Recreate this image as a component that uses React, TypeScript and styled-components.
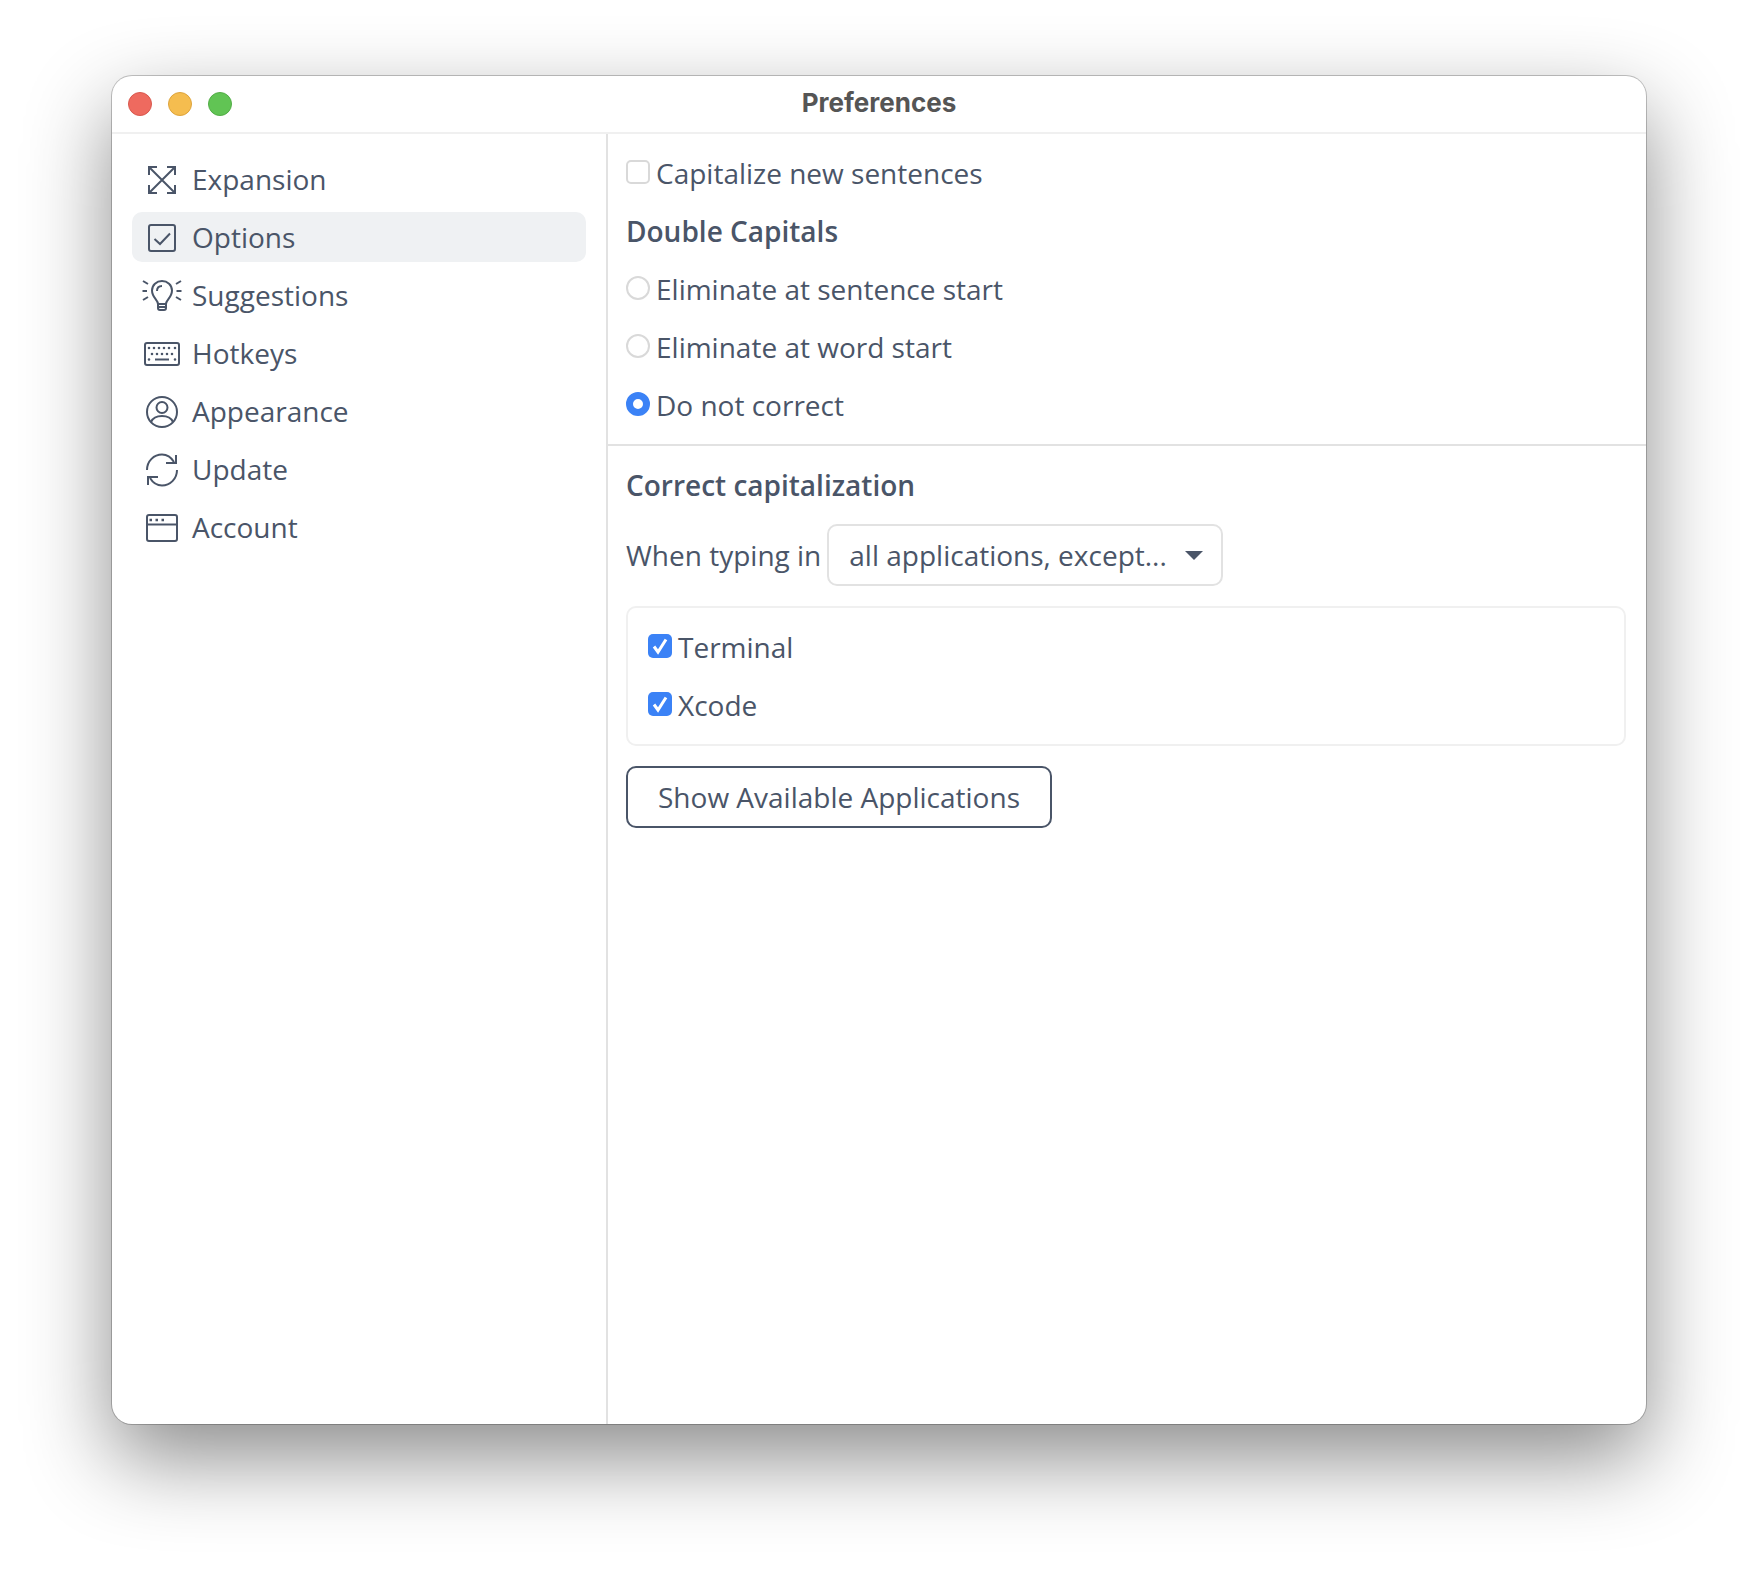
import React from "react";
import styled, { createGlobalStyle } from "styled-components";

const GlobalStyle = createGlobalStyle`
html, body {
  margin: 0;
  padding: 0;
  background: #fff;
}
body {
  font-family: "Open Sans", "Noto Sans", sans-serif;
  color: #4a5568;
}
`;

const IconSvg = ({ children }: { children: React.ReactNode }) => (
  <SideIcon viewBox="0 0 40 40" fill="none" stroke="currentColor" strokeWidth="2">
    {children}
  </SideIcon>
);

const ExpansionIcon = () => (
  <IconSvg>
    <path d="M7 7L33 33M33 7L7 33" />
    <path d="M7 15V7H15M25 7H33V15M33 25V33H25M15 33H7V25" />
  </IconSvg>
);

const OptionsIcon = () => (
  <IconSvg>
    <rect x="7" y="7" width="26" height="26" rx="2" />
    <path d="M12.5 21L18 26L28 15.5" />
  </IconSvg>
);

const SuggestionsIcon = () => (
  <IconSvg>
    <path d="M16 28C16 24 10 21.5 10 14.5C10 9 14.5 5 20 5C25.5 5 30 9 30 14.5C30 21.5 24 24 24 28Z" />
    <path d="M16 28V32C16 33.5 17 34 18 34H22C23 34 24 33.5 24 32V28M16 31H24" />
    <path d="M15 15C15 12 17 10 20 10" />
    <path d="M0.5 15H5M34.5 15H39.5M1 5L6 8M39 5L34 8M1 24L6 21M39 24L34 21" />
  </IconSvg>
);

const HotkeysIcon = () => (
  <IconSvg>
    <rect x="3" y="9" width="34" height="22" rx="2" />
    <path
      d="M7 14h.01M12 14h.01M17 14h.01M22 14h.01M27 14h.01M33 14h.01M10 20h.01M15 20h.01M20 20h.01M25 20h.01M30 20h.01M7 25.5h.01M33 25.5h.01"
      strokeLinecap="round"
      strokeWidth="2.6"
    />
    <path d="M13 25.5H27" />
  </IconSvg>
);

const AppearanceIcon = () => (
  <IconSvg>
    <circle cx="20" cy="20" r="15" />
    <circle cx="20" cy="15.5" r="5.5" />
    <path d="M9 30C11 25.5 15 24 20 24C25 24 29 25.5 31 30" />
  </IconSvg>
);

const UpdateIcon = () => (
  <IconSvg>
    <path d="M5 20C5 11 12 4.5 20 4.5C25 4.5 29 7 32 12" />
    <path d="M34 5V13H24" />
    <path d="M35 20C35 29 28 35.5 20 35.5C15 35.5 11 33 8 28" />
    <path d="M6 35V27H16" />
  </IconSvg>
);

const AccountIcon = () => (
  <IconSvg>
    <rect x="5" y="7" width="30" height="26" rx="2" />
    <path d="M5 16.5H35" />
    <path d="M7.5 12H10M13.5 12H16M19.5 12H22" strokeWidth="2.4" />
  </IconSvg>
);

const navItems = [
  { label: "Expansion", icon: <ExpansionIcon /> },
  { label: "Options", icon: <OptionsIcon />, active: true },
  { label: "Suggestions", icon: <SuggestionsIcon /> },
  { label: "Hotkeys", icon: <HotkeysIcon /> },
  { label: "Appearance", icon: <AppearanceIcon /> },
  { label: "Update", icon: <UpdateIcon /> },
  { label: "Account", icon: <AccountIcon /> },
];

const CheckMark = () => (
  <svg width="24" height="24" viewBox="0 0 24 24" fill="none" stroke="#fff" strokeWidth="3">
    <path d="M6 12.5L10 18L18 5.5" />
  </svg>
);

const App = () => {
  return (
    <Page>
      <GlobalStyle />
      <Window>
        <TitleBar>
          <Lights>
            <Light $color="#ee6a5f" $edge="#d9584e" />
            <Light $color="#f5bd4f" $edge="#dea43c" />
            <Light $color="#61c454" $edge="#52ad46" />
          </Lights>
          <Title>Preferences</Title>
        </TitleBar>

        <Body>
          <Sidebar>
            {navItems.map((item) => (
              <NavRow key={item.label} $active={item.active}>
                {item.icon}
                <span>{item.label}</span>
              </NavRow>
            ))}
          </Sidebar>

          <Main>
            <TopSection>
              <Row>
                <CheckBox />
                <span>Capitalize new sentences</span>
              </Row>
              <Heading>Double Capitals</Heading>
              <Row>
                <Radio />
                <span>Eliminate at sentence start</span>
              </Row>
              <Row>
                <Radio />
                <span>Eliminate at word start</span>
              </Row>
              <Row>
                <Radio $checked />
                <span>Do not correct</span>
              </Row>
            </TopSection>

            <BottomSection>
              <Heading>Correct capitalization</Heading>
              <SelectRow>
                <span>When typing in</span>
                <Select>
                  <span>all applications, except...</span>
                  <Caret />
                </Select>
              </SelectRow>
              <AppList>
                <Row>
                  <CheckBox $checked>
                    <CheckMark />
                  </CheckBox>
                  <span>Terminal</span>
                </Row>
                <Row>
                  <CheckBox $checked>
                    <CheckMark />
                  </CheckBox>
                  <span>Xcode</span>
                </Row>
              </AppList>
              <ShowButton>Show Available Applications</ShowButton>
            </BottomSection>
          </Main>
        </Body>
      </Window>
    </Page>
  );
};

export default App;

const Page = styled.div`
  width: 1758px;
  height: 1572px;
  box-sizing: border-box;
  padding: 76px 112px 148px;
  overflow: hidden;
`;

const Window = styled.div`
  height: 100%;
  background: #fff;
  border-radius: 20px;
  display: flex;
  flex-direction: column;
  box-shadow: 0 0 0 1px rgba(0, 0, 0, 0.22), 0 34px 85px 0 rgba(0, 0, 0, 0.46);
`;

const TitleBar = styled.div`
  height: 56px;
  flex: none;
  display: flex;
  align-items: center;
  position: relative;
  border-bottom: 2px solid #f0f0f0;
`;

const Lights = styled.div`
  display: flex;
  gap: 16px;
  padding-left: 16px;
`;

const Light = styled.div<{ $color: string; $edge: string }>`
  width: 24px;
  height: 24px;
  box-sizing: border-box;
  border-radius: 50%;
  background: ${(p) => p.$color};
  border: 1px solid ${(p) => p.$edge};
`;

const Title = styled.div`
  position: absolute;
  left: 0;
  right: 0;
  top: 11px;
  text-align: center;
  font-family: "Inter", sans-serif;
  font-size: 26px;
  line-height: 32px;
  font-weight: 700;
  color: #555;
`;

const Body = styled.div`
  flex: 1;
  display: flex;
  min-height: 0;
`;

const Sidebar = styled.div`
  width: 496px;
  flex: none;
  box-sizing: border-box;
  padding: 20px 20px 0 20px;
  display: flex;
  flex-direction: column;
  gap: 8px;
  border-right: 2px solid #e2e2e2;
`;

const NavRow = styled.div<{ $active?: boolean }>`
  height: 50px;
  display: flex;
  align-items: center;
  gap: 10px;
  padding-left: 10px;
  border-radius: 10px;
  font-size: 28px;
  background: ${(p) => (p.$active ? "#eff1f3" : "transparent")};
`;

const SideIcon = styled.svg`
  width: 40px;
  height: 40px;
  flex: none;
  margin-top: 2px;
  color: #4a5568;
`;

const Main = styled.div`
  flex: 1;
  min-width: 0;
  display: flex;
  flex-direction: column;
`;

const TopSection = styled.div`
  padding: 10px 18px 10px 18px;
  border-bottom: 2px solid #e2e2e2;
`;

const BottomSection = styled.div`
  padding: 10px 20px 0 18px;
`;

const Row = styled.div`
  height: 58px;
  display: flex;
  align-items: center;
  gap: 6px;
  font-size: 28px;
`;

const Heading = styled.div`
  height: 58px;
  display: flex;
  align-items: center;
  font-size: 28px;
  font-weight: 600;
`;

const CheckBox = styled.span<{ $checked?: boolean }>`
  width: 24px;
  height: 24px;
  flex: none;
  box-sizing: border-box;
  border-radius: 5px;
  margin-top: -3px;
  display: flex;
  background: ${(p) => (p.$checked ? "#3b82f6" : "#fff")};
  border: ${(p) => (p.$checked ? "none" : "2px solid #d9d9d9")};
`;

const Radio = styled.span<{ $checked?: boolean }>`
  width: 24px;
  height: 24px;
  flex: none;
  box-sizing: border-box;
  border-radius: 50%;
  margin-top: -3px;
  background: #fff;
  border: ${(p) => (p.$checked ? "7px solid #3b82f6" : "2px solid #d9d9d9")};
`;

const SelectRow = styled.div`
  display: flex;
  align-items: center;
  gap: 6px;
  font-size: 28px;
  margin-top: 10px;
`;

const Select = styled.div`
  width: 396px;
  height: 62px;
  box-sizing: border-box;
  border: 2px solid #e2e2e2;
  border-radius: 10px;
  display: flex;
  align-items: center;
  justify-content: space-between;
  padding: 0 18px 0 20px;
`;

const Caret = styled.span`
  width: 0;
  height: 0;
  border-left: 9px solid transparent;
  border-right: 9px solid transparent;
  border-top: 9px solid #4a5568;
`;

const AppList = styled.div`
  margin-top: 20px;
  height: 140px;
  box-sizing: border-box;
  padding: 10px 20px 0;
  border: 2px solid #f0f0f0;
  border-radius: 10px;
`;

const ShowButton = styled.div`
  margin-top: 20px;
  width: 426px;
  height: 62px;
  box-sizing: border-box;
  border: 2px solid #4a5568;
  border-radius: 10px;
  display: flex;
  align-items: center;
  justify-content: center;
  font-size: 28px;
`;
